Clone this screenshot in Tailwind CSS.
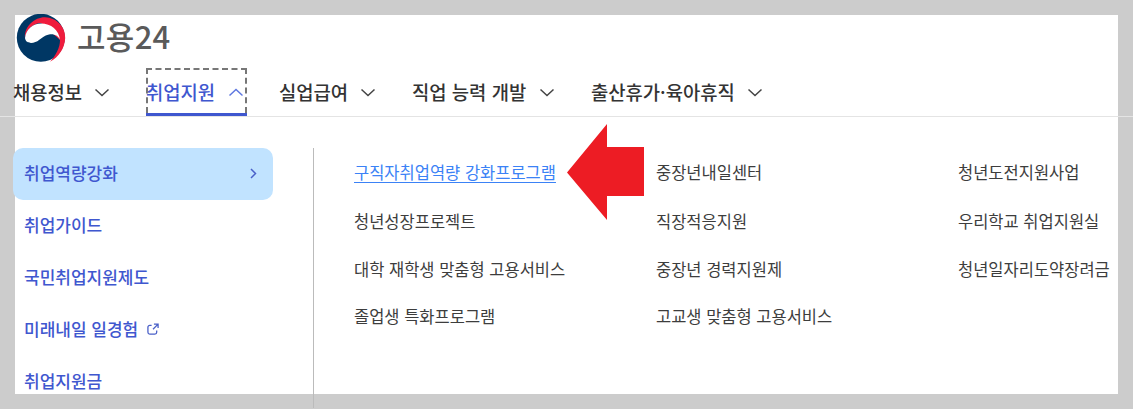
<!DOCTYPE html>
<html lang="ko">
<head>
<meta charset="utf-8">
<script src="https://cdn.jsdelivr.net/npm/@tailwindcss/browser@4"></script>
</head>
<body class="m-0 overflow-hidden bg-[#cccccc]">
<div class="relative h-[409px] w-[1133px] overflow-hidden bg-[#cccccc] font-['Noto_Sans_CJK_KR','Noto_Sans',sans-serif]">
  <div class="absolute left-[15px] top-[15px] h-[379px] w-[1103px] bg-white"></div>
  <div class="relative flex h-[409px] flex-col">
    <header class="flex h-[117px] flex-col border-b border-[#e4e4e4] pl-[13px]">
      <div class="flex h-[54px] items-start gap-[11px] pl-[3px] pt-[14px]">
        <svg width="50" height="48" viewBox="0 0 50 48" class="shrink-0">
          <circle cx="24.8" cy="23.8" r="24" fill="#003764"/>
          <path d="M9 24 C8 12 19 3 29 3.2 C41 3.8 49.6 13 49.2 24 C48.8 34 43 43 34 47.8 C40 41 44 34 44 26 L25 9 C17 9 10 16 9 24Z" fill="#ef1c3d"/>
          <path d="M9 24 C10 15 17 9.5 25 9.5 C35 9.5 43.2 16 44 26 C43 22 38 19.5 33 20.5 C28 21.5 26 24 23 26 C19 29.5 10 31 9 24Z" fill="#ffffff"/>
        </svg>
        <span class="text-[31px] leading-[44px] font-medium tracking-[0.3px] text-[#5a5a5a]">고용24</span>
      </div>
      <nav class="flex h-[62px] items-stretch text-[18.8px] font-medium text-[#333333]">
        <div class="flex w-[133px] items-center pt-[14px]">
          <span>채용정보</span>
          <svg class="ml-[12px]" width="16" height="9" viewBox="0 0 16 9" fill="none" stroke="#444" stroke-width="1.5"><path d="M1.5 1.5 L8 7.5 L14.5 1.5"/></svg>
        </div>
        <div class="relative flex w-[101px] items-center pt-[14px] text-[#3f57cf]">
          <div class="absolute left-0 top-[14px] h-[45px] w-[101px] border-2 border-b-0 border-dashed border-[#777777]"></div>
          <div class="absolute bottom-0 left-0 h-[3px] w-[101px] bg-[#3f57cf]"></div>
          <span>취업지원</span>
          <svg class="ml-[13px]" width="16" height="9" viewBox="0 0 16 9" fill="none" stroke="#5f78e0" stroke-width="1.5"><path d="M1.5 7.5 L8 1.5 L14.5 7.5"/></svg>
        </div>
        <div class="ml-[32px] flex w-[133px] items-center pt-[14px]">
          <span>실업급여</span>
          <svg class="ml-[12px]" width="16" height="9" viewBox="0 0 16 9" fill="none" stroke="#444" stroke-width="1.5"><path d="M1.5 1.5 L8 7.5 L14.5 1.5"/></svg>
        </div>
        <div class="flex w-[179px] items-center pt-[14px]">
          <span>직업 능력 개발</span>
          <svg class="ml-[13px]" width="16" height="9" viewBox="0 0 16 9" fill="none" stroke="#444" stroke-width="1.5"><path d="M1.5 1.5 L8 7.5 L14.5 1.5"/></svg>
        </div>
        <div class="flex items-center pt-[14px]">
          <span>출산휴가·육아휴직</span>
          <svg class="ml-[12px]" width="16" height="9" viewBox="0 0 16 9" fill="none" stroke="#444" stroke-width="1.5"><path d="M1.5 1.5 L8 7.5 L14.5 1.5"/></svg>
        </div>
      </nav>
    </header>
    <main class="flex flex-1 pl-[13px] pt-[31px]">
      <aside class="flex w-[260px] shrink-0 flex-col text-[17px] font-medium text-[#3f57cf]">
        <div class="flex h-[52px] items-center justify-between rounded-[10px] bg-[#c1e3ff] pb-[2px] pl-[11px] pr-[16px]">
          <span>취업역량강화</span>
          <svg width="7" height="11" viewBox="0 0 7 11" fill="none" stroke="#4a60c8" stroke-width="1.5"><path d="M1 1 L5.5 5.5 L1 10"/></svg>
        </div>
        <div class="flex h-[52px] items-center pb-[2px] pl-[11px]">취업가이드</div>
        <div class="flex h-[52px] items-center pb-[2px] pl-[11px]">국민취업지원제도</div>
        <div class="flex h-[52px] items-center gap-[9px] pb-[2px] pl-[11px]">
          <span>미래내일 일경험</span>
          <svg width="12" height="12" viewBox="0 0 13 13" fill="none" stroke="#4a60c8" stroke-width="1.4"><path d="M5 2.5 H3 A2 2 0 0 0 1 4.5 V10 A2 2 0 0 0 3 12 H8.5 A2 2 0 0 0 10.5 10 V8"/><path d="M7.5 1.2 H12 V5.5 M12 1.2 L6.5 6.8"/></svg>
        </div>
        <div class="flex h-[52px] items-center pb-[2px] pl-[11px]">취업지원금</div>
      </aside>
      <div class="ml-[40px] h-[260px] w-px shrink-0 bg-[#bbbbbb]"></div>
      <div class="grid h-[192px] flex-1 grid-cols-[302px_302px_1fr] grid-rows-[48px_48px_48px_48px] pl-[40px] text-[16.5px] text-[#3d3d3d]">
        <a class="flex items-center"><span class="text-[#3b82f6] underline underline-offset-[3px]">구직자취업역량 강화프로그램</span></a>
        <div class="flex items-center">중장년내일센터</div>
        <div class="flex items-center">청년도전지원사업</div>
        <div class="flex items-center pt-[2px]">청년성장프로젝트</div>
        <div class="flex items-center pt-[2px]">직장적응지원</div>
        <div class="flex items-center pt-[2px]">우리학교 취업지원실</div>
        <div class="flex items-center pt-[2px]">대학 재학생 맞춤형 고용서비스</div>
        <div class="flex items-center pt-[2px]">중장년 경력지원제</div>
        <div class="flex items-center pt-[2px]">청년일자리도약장려금</div>
        <div class="flex items-center">졸업생 특화프로그램</div>
        <div class="flex items-center">고교생 맞춤형 고용서비스</div>
      </div>
    </main>
  </div>
  <svg class="absolute left-[567px] top-[124px]" width="78" height="97" viewBox="0 0 78 97"><path d="M0 48.5 L40 0 V23 H77 V72 H40 V96 Z" fill="#ed1c24"/></svg>
</div>
</body>
</html>
